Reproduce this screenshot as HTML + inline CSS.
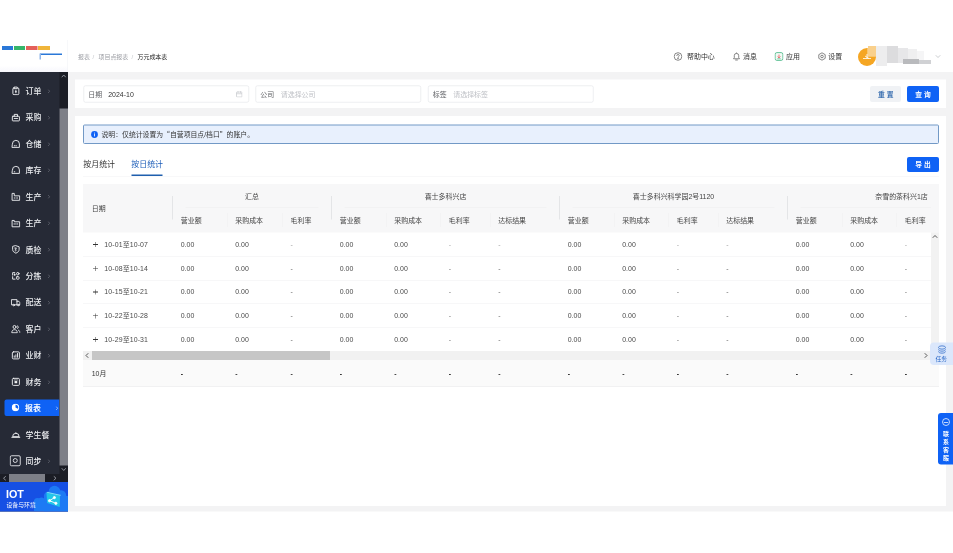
<!DOCTYPE html><html lang="zh-CN"><head><meta charset="utf-8"><title>万元成本表</title><style>
*{box-sizing:border-box;margin:0;padding:0}
html,body{width:953px;height:553px;overflow:hidden;background:#fff}
body{font-family:"Liberation Sans","Noto Sans CJK SC",sans-serif;color:#333}
#root{position:absolute;left:0;top:0;width:1906px;height:1106px;transform:scale(.5);transform-origin:0 0;background:#fff;overflow:hidden;filter:grayscale(0)}
.abs{position:absolute}
.t{position:absolute;white-space:nowrap;line-height:1;transform:translateY(-50%)}
#side{left:0;top:144px;width:136px;height:879px;background:#262a36}
#main{left:136px;top:144px;width:1770px;height:879px;background:#f3f3f4}
.card{position:absolute;background:#fff}
.inp{position:absolute;top:171px;height:34px;width:331px;border:1.5px solid #dcdee2;border-radius:4px;background:#fff}
.mi{position:absolute;left:0;width:119px;height:34px}
.mi .t{font-size:15.9px;color:#eceef1;left:51px;top:18px;font-weight:500}
.mi svg.ic{position:absolute;left:21.5px;top:7.5px;width:19.5px;height:19.5px;fill:none;stroke:#f1f2f4;stroke-width:1.7;stroke-linecap:round;stroke-linejoin:round}
.mi svg.ch{position:absolute;left:95px;top:13.5px;width:6px;height:9px;fill:none;stroke:#6d707b;stroke-width:1.8}
.q{font-family:"Noto Sans CJK SC",sans-serif}
.th{font-size:13.9px;color:#444}
.td{font-size:13.9px;color:#4a4a4a}
</style></head><body><div id="root">
<div class="abs" style="left:0;top:80px;width:1906px;height:64px;background:#fff"></div>
<div class="abs" style="left:0;top:80px;width:136px;height:64px;background:linear-gradient(#fff 0,#fff 80%,#f7f7fc 100%);border-right:1.5px solid #eff0f4"></div>
<div class="abs" style="left:4px;top:91.5px;width:22px;height:8.5px;background:#2a78d8"></div>
<div class="abs" style="left:28px;top:91.5px;width:22px;height:8.5px;background:#35b56a"></div>
<div class="abs" style="left:52px;top:91.5px;width:23px;height:8.5px;background:#e4605a"></div>
<div class="abs" style="left:76px;top:91.5px;width:24px;height:8.5px;background:#f0b53a"></div>
<div class="abs" style="left:80px;top:107px;width:44px;height:3px;background:#2a78d8"></div>
<div class="abs" style="left:79px;top:107px;width:3px;height:12px;background:#8fb6ea"></div>
<div class="t" style="left:156px;top:113.6px;font-size:11.9px;color:#9b9da3">报表</div>
<div class="t" style="left:185px;top:113.6px;font-size:11.9px;color:#c4c6cb">/</div>
<div class="t" style="left:197px;top:113.6px;font-size:11.9px;color:#9b9da3">项目点报表</div>
<div class="t" style="left:263px;top:113.6px;font-size:11.9px;color:#c4c6cb">/</div>
<div class="t" style="left:275px;top:113.6px;font-size:11.9px;color:#222">万元成本表</div>
<svg class="abs" style="left:1347px;top:103.6px" width="18" height="18" viewBox="0 0 18 18" fill="none" stroke="#555" stroke-width="1.4"><circle cx="9" cy="9" r="7.6"/><path d="M6.6 7.2a2.4 2.4 0 1 1 3.4 2.2c-.7.4-1 .8-1 1.6" stroke-linecap="round"/><circle cx="9" cy="13" r=".6" fill="#555"/></svg>
<div class="t" style="left:1374px;top:112.6px;font-size:13.9px;color:#333">帮助中心</div>
<svg class="abs" style="left:1464px;top:102.6px" width="18" height="20" viewBox="0 0 18 20" fill="none" stroke="#555" stroke-width="1.4" stroke-linejoin="round"><path d="M3 14.5h12l-1.6-2.4V8.2a4.4 4.4 0 0 0-8.8 0v3.9z"/><path d="M7.2 17h3.6" stroke-linecap="round"/><path d="M9 2.2v1.6"/></svg>
<div class="t" style="left:1486px;top:112.6px;font-size:13.9px;color:#333">消息</div>
<svg class="abs" style="left:1549px;top:103.6px" width="18" height="18" viewBox="0 0 18 18" fill="none"><rect x="1.2" y="1.2" width="15.6" height="15.6" rx="3.5" stroke="#3fb37f" stroke-width="1.6" fill="#f2fbf6"/><path d="M9 5.2v6.2M6.2 9l2.8 2.8L11.8 9" stroke="#e5484d" stroke-width="1.5"/><path d="M5.5 13.6h7" stroke="#3fb37f" stroke-width="1.3"/></svg>
<div class="t" style="left:1572px;top:112.6px;font-size:13.9px;color:#333">应用</div>
<svg class="abs" style="left:1634.5px;top:103.6px" width="18" height="18" viewBox="0 0 18 18" fill="none" stroke="#555" stroke-width="1.4" stroke-linejoin="round"><path d="M9 1.6l6.4 3.7v7.4L9 16.4l-6.4-3.7V5.3z"/><circle cx="9" cy="9" r="2.6"/></svg>
<div class="t" style="left:1656.5px;top:112.6px;font-size:13.9px;color:#333">设置</div>
<div class="abs" style="left:1716px;top:96px;width:36px;height:36px;border-radius:50%;background:#f5a623;overflow:hidden"><div class="abs" style="left:18px;top:0;width:18px;height:18px;background:#f8c56f"></div></div>
<svg class="abs" style="left:1724px;top:106px" width="20" height="16" viewBox="0 0 20 16" fill="none" stroke="#fff" stroke-width="1.6"><path d="M2 11h16M6 6l8 5M10 2v9"/></svg>
<div class="abs" style="left:1736px;top:92px;width:18px;height:20px;background:#f9d08c"></div>
<div class="abs" style="left:1752px;top:92px;width:22px;height:40px;background:#ededee"></div>
<div class="abs" style="left:1774px;top:92px;width:22px;height:34px;background:#dcdcde"></div>
<div class="abs" style="left:1796px;top:96px;width:20px;height:30px;background:#e7e7e9"></div>
<div class="abs" style="left:1816px;top:98px;width:18px;height:24px;background:#efeff0"></div>
<div class="abs" style="left:1834px;top:102px;width:14px;height:18px;background:#f5f5f6"></div>
<div class="abs" style="left:1806px;top:118px;width:32px;height:10px;background:#b9babd"></div>
<div class="abs" style="left:1838px;top:120px;width:24px;height:8px;background:#d0d1d4"></div>
<svg class="abs" style="left:1870px;top:108.6px" width="12" height="8" viewBox="0 0 12 8" fill="none" stroke="#b5b7bc" stroke-width="1.4"><path d="M1.5 1.5L6 6l4.5-4.5"/></svg>
<div id="side" class="abs">
<div class="mi" style="top:20.2px">
<svg class="ic" viewBox="0 0 18 18"><rect x="3.5" y="3.5" width="11" height="12.5" rx="2"/><path d="M6.5 2h5v3h-5z" fill="#262a36"/><path d="M9 8v4.5M8 10.5h2"/></svg>
<div class="t">订单</div>
<svg class="ch" viewBox="0 0 8 12"><path d="M1.5 1.5L6 6l-4.5 4.5"/></svg>
</div>
<div class="mi" style="top:73.1px">
<svg class="ic" viewBox="0 0 18 18"><rect x="2.5" y="7" width="13" height="8.5" rx="1"/><path d="M6 7V3.5h6V7M6 11h6"/></svg>
<div class="t">采购</div>
<svg class="ch" viewBox="0 0 8 12"><path d="M1.5 1.5L6 6l-4.5 4.5"/></svg>
</div>
<div class="mi" style="top:126px">
<svg class="ic" viewBox="0 0 18 18"><path d="M2.5 9a6.5 6.5 0 0 1 13 0v6.5h-13z"/><path d="M6 12.5h1M9 12.5h1"/></svg>
<div class="t">仓储</div>
<svg class="ch" viewBox="0 0 8 12"><path d="M1.5 1.5L6 6l-4.5 4.5"/></svg>
</div>
<div class="mi" style="top:178.9px">
<svg class="ic" viewBox="0 0 18 18"><path d="M2.5 9a6.5 6.5 0 0 1 13 0v6.5h-13z"/><path d="M6 12.5h1"/></svg>
<div class="t">库存</div>
<svg class="ch" viewBox="0 0 8 12"><path d="M1.5 1.5L6 6l-4.5 4.5"/></svg>
</div>
<div class="mi" style="top:231.8px">
<svg class="ic" viewBox="0 0 18 18"><path d="M2 15.5V3.5h4V8h10v7.5z"/><path d="M6 12h1.5M10.5 12h1.5"/></svg>
<div class="t">生产</div>
<svg class="ch" viewBox="0 0 8 12"><path d="M1.5 1.5L6 6l-4.5 4.5"/></svg>
</div>
<div class="mi" style="top:284.7px">
<svg class="ic" viewBox="0 0 18 18"><path d="M2 15.5V4.5h4v2.5h10v8.5z"/><path d="M5.5 11h1M8.5 11h1M11.5 11h1"/></svg>
<div class="t">生产</div>
<svg class="ch" viewBox="0 0 8 12"><path d="M1.5 1.5L6 6l-4.5 4.5"/></svg>
</div>
<div class="mi" style="top:337.6px">
<svg class="ic" viewBox="0 0 18 18"><path d="M9 2.2l6 2v5c0 3.4-2.6 5.6-6 6.8-3.4-1.2-6-3.4-6-6.8v-5z"/><path d="M7 6.5h3l-2 2.5c2.5 0 2.5 3-.5 3"/></svg>
<div class="t">质检</div>
<svg class="ch" viewBox="0 0 8 12"><path d="M1.5 1.5L6 6l-4.5 4.5"/></svg>
</div>
<div class="mi" style="top:390.5px">
<svg class="ic" viewBox="0 0 18 18"><path d="M7 3H3v4.5M3 10.5V15h4.5"/><circle cx="12.5" cy="5" r="2.3"/><rect x="10.2" y="10.5" width="4.6" height="4.6" rx="1"/><rect x="5.8" y="6" width="2" height="2" rx=".5"/></svg>
<div class="t">分拣</div>
<svg class="ch" viewBox="0 0 8 12"><path d="M1.5 1.5L6 6l-4.5 4.5"/></svg>
</div>
<div class="mi" style="top:443.4px">
<svg class="ic" viewBox="0 0 18 18"><path d="M1.5 4h9.5v9.5h-9.5zM11 7h3.5l2 2.5v4h-5.5"/><circle cx="5" cy="14" r="1.4" fill="#262a36"/><circle cx="13.5" cy="14" r="1.4" fill="#262a36"/></svg>
<div class="t">配送</div>
<svg class="ch" viewBox="0 0 8 12"><path d="M1.5 1.5L6 6l-4.5 4.5"/></svg>
</div>
<div class="mi" style="top:496.3px">
<svg class="ic" viewBox="0 0 18 18"><circle cx="6.5" cy="5.5" r="2.8"/><path d="M1.5 15.5c0-3.5 2-5 5-5s5 1.5 5 5z"/><path d="M12 3.5a2.5 2.5 0 0 1 0 4.6M14 11.5c1.8.5 2.5 2 2.5 4"/></svg>
<div class="t">客户</div>
<svg class="ch" viewBox="0 0 8 12"><path d="M1.5 1.5L6 6l-4.5 4.5"/></svg>
</div>
<div class="mi" style="top:549.2px">
<svg class="ic" viewBox="0 0 18 18"><rect x="2.5" y="2.5" width="13" height="13" rx="2"/><path d="M6 12.5v-2.5M9 12.5v-4.5M12 12.5v-7"/></svg>
<div class="t">业财</div>
<svg class="ch" viewBox="0 0 8 12"><path d="M1.5 1.5L6 6l-4.5 4.5"/></svg>
</div>
<div class="mi" style="top:602.1px">
<svg class="ic" viewBox="0 0 18 18"><rect x="2.5" y="2.5" width="13" height="13" rx="2"/><rect x="6.5" y="7.5" width="5" height="4" fill="#f1f2f4" stroke="none"/><path d="M6 5.5h6" stroke-width="1.2"/></svg>
<div class="t">财务</div>
<svg class="ch" viewBox="0 0 8 12"><path d="M1.5 1.5L6 6l-4.5 4.5"/></svg>
</div>
<div class="mi" style="top:654.7px;left:8.5px;width:110.5px;height:33px;background:#0f62f5;border-radius:4px 0 0 4px">
<svg class="abs" style="left:14px;top:8.5px" width="16" height="16" viewBox="0 0 16 16"><circle cx="8" cy="8" r="7.4" fill="#fff"/><path d="M8 8V2.5A5.5 5.5 0 0 1 12.8 10.7z" fill="#0f62f5"/></svg>
<div class="t" style="left:41.5px;font-weight:bold;color:#fff">报表</div>
<svg class="ch" style="left:102.5px;stroke:#cfe0ff" viewBox="0 0 8 12"><path d="M1.5 1.5L6 6l-4.5 4.5"/></svg></div>
<div class="mi" style="top:707.9px">
<svg class="ic" viewBox="0 0 18 18"><path d="M1.5 14.5h15M3 12.5a6 5.5 0 0 1 12 0zM9 6v1"/></svg>
<div class="t">学生餐</div>
</div>
<div class="mi" style="top:760.8px">
<svg class="abs" style="left:19px;top:5px;fill:none;stroke:#e8e9ec;stroke-width:1.8" width="24" height="24" viewBox="0 0 24 24"><rect x="1.5" y="1.5" width="20" height="20" rx="2.5"/><circle cx="11.5" cy="11" r="4"/></svg>
<div class="t">同步</div>
<svg class="ch" viewBox="0 0 8 12"><path d="M1.5 1.5L6 6l-4.5 4.5"/></svg>
</div>
<div class="abs" style="left:119px;top:0;width:17px;height:804px;background:#1b1d25"></div>
<div class="abs" style="left:119px;top:73px;width:17px;height:714px;background:#7d7f87"></div>
<svg class="abs" style="left:122px;top:4px" width="11" height="8" viewBox="0 0 11 8" fill="none" stroke="#8d9099" stroke-width="2"><path d="M1.5 6.5l4-4.5 4 4.5"/></svg>
<svg class="abs" style="left:122px;top:791px" width="11" height="8" viewBox="0 0 11 8" fill="none" stroke="#8d9099" stroke-width="2"><path d="M1.5 1.5l4 4.5 4-4.5"/></svg>
<div class="abs" style="left:0;top:804px;width:136px;height:16px;background:#1b1d25"></div>
<div class="abs" style="left:18px;top:804px;width:72px;height:16px;background:#7d7f87"></div>
<svg class="abs" style="left:5px;top:807px" width="8" height="11" viewBox="0 0 8 11" fill="none" stroke="#8d9099" stroke-width="2"><path d="M6.5 1.5l-4.5 4 4.5 4"/></svg>
<svg class="abs" style="left:106px;top:807px" width="8" height="11" viewBox="0 0 8 11" fill="none" stroke="#8d9099" stroke-width="2"><path d="M1.5 1.5l4.5 4-4.5 4"/></svg>
<div class="abs" style="left:0;top:820px;width:136px;height:59px;background:#1650e4;overflow:hidden">
<svg class="abs" style="left:0;top:0" width="136" height="59" viewBox="0 0 68 29.5"><g fill="#1d7af4"><circle cx="54.5" cy="9.5" r="5.8"/><circle cx="61" cy="13.5" r="5.2"/><circle cx="48.5" cy="14" r="4.6"/><rect x="44" y="14" width="24" height="16"/><circle cx="37.5" cy="19.5" r="3.6"/><circle cx="41.5" cy="18.5" r="3"/><rect x="34" y="19.5" width="14" height="10"/></g><path d="M46.4 10.7L60 13.7l-.3 11.3-12.5-4z" fill="#21c6e8"/><path d="M46.4 10.7L60 13.7l1.2-.8-13.4-3z" fill="#7fe3f5"/><g stroke="#fff" stroke-width=".9" fill="#fff"><path d="M54.4 15.6l-4.9 3.1 6.4 2.6" fill="none"/><circle cx="49.5" cy="18.7" r="1.1"/><circle cx="54.4" cy="15.6" r="1.1"/><circle cx="55.9" cy="21.3" r="1.1"/></g></svg>
<div class="t" style="left:12px;top:24.5px;font-size:21.5px;font-weight:bold;color:#fff;letter-spacing:0">IOT</div>
<div class="t" style="left:13px;top:45.8px;font-size:11.7px;color:#fff">设备与环境</div>
</div>
</div>
<div id="main" class="abs"></div>
<div class="card" style="left:150px;top:159px;width:1742px;height:57px"></div>
<div class="inp" style="left:166.5px"></div>
<div class="t" style="left:176.5px;top:188.8px;font-size:13.9px;color:#606266">日期</div>
<div class="t" style="left:216.5px;top:188.8px;font-size:13.9px;color:#333">2024-10</div>
<svg class="abs" style="left:472px;top:182px" width="13" height="13" viewBox="0 0 13 13" fill="none" stroke="#c0c2c7" stroke-width="1.3"><rect x="1" y="2" width="11" height="10" rx="1"/><path d="M1 5.5h11M4 .500v3M9 .500v3"/></svg>
<div class="inp" style="left:510.5px"></div>
<div class="t" style="left:520.5px;top:188.8px;font-size:13.9px;color:#606266">公司</div>
<div class="t" style="left:561.5px;top:188.8px;font-size:13.9px;color:#bfc1c6">请选择公司</div>
<div class="inp" style="left:855.5px"></div>
<div class="t" style="left:865.5px;top:188.8px;font-size:13.9px;color:#606266">标签</div>
<div class="t" style="left:906.5px;top:188.8px;font-size:13.9px;color:#bfc1c6">请选择标签</div>
<div class="abs" style="left:1740px;top:172px;width:62px;height:32px;background:#f0f2f5;border-radius:4px"></div>
<div class="t" style="left:1756px;top:188.5px;font-size:13.5px;color:#3a6fb0;font-weight:bold">重 置</div>
<div class="abs" style="left:1814px;top:172px;width:64px;height:32px;background:#0f62f5;border-radius:4px"></div>
<div class="t" style="left:1830.5px;top:188.5px;font-size:13.5px;color:#fff;font-weight:bold">查 询</div>
<div class="card" style="left:150px;top:232px;width:1742px;height:780px"></div>
<div class="abs" style="left:166px;top:248.5px;width:1712px;height:39px;background:#e8f0fd;border:2px solid #7299c6;border-radius:3px"></div>
<svg class="abs" style="left:181.5px;top:261.5px" width="14" height="14" viewBox="0 0 14 14"><circle cx="7" cy="7" r="6.8" fill="#0f62f5"/><rect x="6.2" y="5.8" width="1.6" height="5" fill="#fff"/><circle cx="7" cy="3.9" r="1" fill="#fff"/></svg>
<div class="t" style="left:203px;top:268.6px;font-size:13.7px;color:#333">说明：仅统计设置为<span class="q">“</span>自营项目点/档口<span class="q">”</span>的账户。</div>
<div class="t" style="left:166.5px;top:329px;font-size:15.9px;color:#333">按月统计</div>
<div class="t" style="left:262.5px;top:329px;font-size:15.9px;color:#1c5db8">按日统计</div>
<div class="abs" style="left:166px;top:352px;width:1712px;height:1px;background:#f1f1f2"></div>
<div class="abs" style="left:262.5px;top:349px;width:62px;height:3px;background:#1f5fae"></div>
<div class="abs" style="left:1814px;top:313.5px;width:64px;height:30.5px;background:#0f62f5;border-radius:4px"></div>
<div class="t" style="left:1830.5px;top:329px;font-size:13.5px;color:#fff;font-weight:bold">导 出</div>
<div class="abs" style="left:166px;top:368px;width:1711.5px;height:97px;background:#f7f7f8"></div>
<div class="abs" id="tbl" style="left:166px;top:368px;width:1696px;height:406px;overflow:hidden">
<div class="t th" style="left:17.5px;top:49.19999999999999px">日期</div>
<div class="t th" style="left:338px;top:26.19999999999999px;transform:translate(-50%,-50%)">汇总</div>
<div class="abs" style="left:178.2px;top:24px;width:1.5px;height:47px;background:#e4e5e7"></div>
<div class="abs" style="left:205px;top:45.5px;width:266px;height:1px;background:#ececee"></div>
<div class="t th" style="left:725px;top:26.19999999999999px;transform:translate(-50%,-50%)">喜士多科兴店</div>
<div class="abs" style="left:496.2px;top:24px;width:1.5px;height:47px;background:#e4e5e7"></div>
<div class="abs" style="left:523px;top:45.5px;width:404px;height:1px;background:#ececee"></div>
<div class="t th" style="left:1181px;top:26.19999999999999px;transform:translate(-50%,-50%)">喜士多科兴科学园2号1120</div>
<div class="abs" style="left:952.2px;top:24px;width:1.5px;height:47px;background:#e4e5e7"></div>
<div class="abs" style="left:979px;top:45.5px;width:404px;height:1px;background:#ececee"></div>
<div class="t th" style="left:1637px;top:26.19999999999999px;transform:translate(-50%,-50%)">奈雪的茶科兴1店</div>
<div class="abs" style="left:1408.2px;top:24px;width:1.5px;height:47px;background:#e4e5e7"></div>
<div class="abs" style="left:1435px;top:45.5px;width:404px;height:1px;background:#ececee"></div>
<div class="t th" style="left:195.5px;top:72.60000000000002px">营业额</div>
<div class="t th" style="left:304.5px;top:72.60000000000002px">采购成本</div>
<div class="abs" style="left:287.5px;top:58px;width:1px;height:28px;background:#efeff1"></div>
<div class="t th" style="left:415px;top:72.60000000000002px">毛利率</div>
<div class="abs" style="left:398px;top:58px;width:1px;height:28px;background:#efeff1"></div>
<div class="t th" style="left:513.5px;top:72.60000000000002px">营业额</div>
<div class="t th" style="left:622.5px;top:72.60000000000002px">采购成本</div>
<div class="abs" style="left:605.5px;top:58px;width:1px;height:28px;background:#efeff1"></div>
<div class="t th" style="left:731.5px;top:72.60000000000002px">毛利率</div>
<div class="abs" style="left:714.5px;top:58px;width:1px;height:28px;background:#efeff1"></div>
<div class="t th" style="left:830.5px;top:72.60000000000002px">达标结果</div>
<div class="abs" style="left:813.5px;top:58px;width:1px;height:28px;background:#efeff1"></div>
<div class="t th" style="left:969.5px;top:72.60000000000002px">营业额</div>
<div class="t th" style="left:1078.5px;top:72.60000000000002px">采购成本</div>
<div class="abs" style="left:1061.5px;top:58px;width:1px;height:28px;background:#efeff1"></div>
<div class="t th" style="left:1187.5px;top:72.60000000000002px">毛利率</div>
<div class="abs" style="left:1170.5px;top:58px;width:1px;height:28px;background:#efeff1"></div>
<div class="t th" style="left:1286.5px;top:72.60000000000002px">达标结果</div>
<div class="abs" style="left:1269.5px;top:58px;width:1px;height:28px;background:#efeff1"></div>
<div class="t th" style="left:1425.5px;top:72.60000000000002px">营业额</div>
<div class="t th" style="left:1534.5px;top:72.60000000000002px">采购成本</div>
<div class="abs" style="left:1517.5px;top:58px;width:1px;height:28px;background:#efeff1"></div>
<div class="t th" style="left:1643.5px;top:72.60000000000002px">毛利率</div>
<div class="abs" style="left:1626.5px;top:58px;width:1px;height:28px;background:#efeff1"></div>
<div class="t th" style="left:1742.5px;top:72.60000000000002px">达标结果</div>
<div class="abs" style="left:1725.5px;top:58px;width:1px;height:28px;background:#efeff1"></div>
<div class="abs" style="left:19.5px;top:120.3px;width:10px;height:1.4px;background:#333"></div><div class="abs" style="left:23.8px;top:116px;width:1.4px;height:10px;background:#333"></div>
<div class="t td" style="left:42.5px;top:121px;letter-spacing:.25px">10-01至10-07</div>
<div class="t td" style="left:195.5px;top:121px;color:#4a4a4a">0.00</div>
<div class="t td" style="left:304.5px;top:121px;color:#4a4a4a">0.00</div>
<div class="t td" style="left:415px;top:121px;color:#a0a0a0">-</div>
<div class="t td" style="left:513.5px;top:121px;color:#4a4a4a">0.00</div>
<div class="t td" style="left:622.5px;top:121px;color:#4a4a4a">0.00</div>
<div class="t td" style="left:731.5px;top:121px;color:#a0a0a0">-</div>
<div class="t td" style="left:830.5px;top:121px;color:#a0a0a0">-</div>
<div class="t td" style="left:969.5px;top:121px;color:#4a4a4a">0.00</div>
<div class="t td" style="left:1078.5px;top:121px;color:#4a4a4a">0.00</div>
<div class="t td" style="left:1187.5px;top:121px;color:#a0a0a0">-</div>
<div class="t td" style="left:1286.5px;top:121px;color:#a0a0a0">-</div>
<div class="t td" style="left:1425.5px;top:121px;color:#4a4a4a">0.00</div>
<div class="t td" style="left:1534.5px;top:121px;color:#4a4a4a">0.00</div>
<div class="t td" style="left:1643.5px;top:121px;color:#a0a0a0">-</div>
<div class="t td" style="left:1742.5px;top:121px;color:#a0a0a0">-</div>
<div class="abs" style="left:0;top:144px;width:1700px;height:1px;background:#efeff0"></div>
<div class="abs" style="left:19.5px;top:167.9px;width:10px;height:1.4px;background:#333"></div><div class="abs" style="left:23.8px;top:163.6px;width:1.4px;height:10px;background:#333"></div>
<div class="t td" style="left:42.5px;top:168.6px;letter-spacing:.25px">10-08至10-14</div>
<div class="t td" style="left:195.5px;top:168.6px;color:#4a4a4a">0.00</div>
<div class="t td" style="left:304.5px;top:168.6px;color:#4a4a4a">0.00</div>
<div class="t td" style="left:415px;top:168.6px;color:#666">-</div>
<div class="t td" style="left:513.5px;top:168.6px;color:#4a4a4a">0.00</div>
<div class="t td" style="left:622.5px;top:168.6px;color:#4a4a4a">0.00</div>
<div class="t td" style="left:731.5px;top:168.6px;color:#666">-</div>
<div class="t td" style="left:830.5px;top:168.6px;color:#666">-</div>
<div class="t td" style="left:969.5px;top:168.6px;color:#4a4a4a">0.00</div>
<div class="t td" style="left:1078.5px;top:168.6px;color:#4a4a4a">0.00</div>
<div class="t td" style="left:1187.5px;top:168.6px;color:#666">-</div>
<div class="t td" style="left:1286.5px;top:168.6px;color:#666">-</div>
<div class="t td" style="left:1425.5px;top:168.6px;color:#4a4a4a">0.00</div>
<div class="t td" style="left:1534.5px;top:168.6px;color:#4a4a4a">0.00</div>
<div class="t td" style="left:1643.5px;top:168.6px;color:#666">-</div>
<div class="t td" style="left:1742.5px;top:168.6px;color:#666">-</div>
<div class="abs" style="left:0;top:191.5px;width:1700px;height:1px;background:#efeff0"></div>
<div class="abs" style="left:19.5px;top:215.4px;width:10px;height:1.4px;background:#333"></div><div class="abs" style="left:23.8px;top:211.1px;width:1.4px;height:10px;background:#333"></div>
<div class="t td" style="left:42.5px;top:216.1px;letter-spacing:.25px">10-15至10-21</div>
<div class="t td" style="left:195.5px;top:216.1px;color:#4a4a4a">0.00</div>
<div class="t td" style="left:304.5px;top:216.1px;color:#4a4a4a">0.00</div>
<div class="t td" style="left:415px;top:216.1px;color:#666">-</div>
<div class="t td" style="left:513.5px;top:216.1px;color:#4a4a4a">0.00</div>
<div class="t td" style="left:622.5px;top:216.1px;color:#4a4a4a">0.00</div>
<div class="t td" style="left:731.5px;top:216.1px;color:#666">-</div>
<div class="t td" style="left:830.5px;top:216.1px;color:#666">-</div>
<div class="t td" style="left:969.5px;top:216.1px;color:#4a4a4a">0.00</div>
<div class="t td" style="left:1078.5px;top:216.1px;color:#4a4a4a">0.00</div>
<div class="t td" style="left:1187.5px;top:216.1px;color:#666">-</div>
<div class="t td" style="left:1286.5px;top:216.1px;color:#666">-</div>
<div class="t td" style="left:1425.5px;top:216.1px;color:#4a4a4a">0.00</div>
<div class="t td" style="left:1534.5px;top:216.1px;color:#4a4a4a">0.00</div>
<div class="t td" style="left:1643.5px;top:216.1px;color:#666">-</div>
<div class="t td" style="left:1742.5px;top:216.1px;color:#666">-</div>
<div class="abs" style="left:0;top:239px;width:1700px;height:1px;background:#efeff0"></div>
<div class="abs" style="left:19.5px;top:262.9px;width:10px;height:1.4px;background:#333"></div><div class="abs" style="left:23.8px;top:258.6px;width:1.4px;height:10px;background:#333"></div>
<div class="t td" style="left:42.5px;top:263.6px;letter-spacing:.25px">10-22至10-28</div>
<div class="t td" style="left:195.5px;top:263.6px;color:#4a4a4a">0.00</div>
<div class="t td" style="left:304.5px;top:263.6px;color:#4a4a4a">0.00</div>
<div class="t td" style="left:415px;top:263.6px;color:#666">-</div>
<div class="t td" style="left:513.5px;top:263.6px;color:#4a4a4a">0.00</div>
<div class="t td" style="left:622.5px;top:263.6px;color:#4a4a4a">0.00</div>
<div class="t td" style="left:731.5px;top:263.6px;color:#666">-</div>
<div class="t td" style="left:830.5px;top:263.6px;color:#666">-</div>
<div class="t td" style="left:969.5px;top:263.6px;color:#4a4a4a">0.00</div>
<div class="t td" style="left:1078.5px;top:263.6px;color:#4a4a4a">0.00</div>
<div class="t td" style="left:1187.5px;top:263.6px;color:#666">-</div>
<div class="t td" style="left:1286.5px;top:263.6px;color:#666">-</div>
<div class="t td" style="left:1425.5px;top:263.6px;color:#4a4a4a">0.00</div>
<div class="t td" style="left:1534.5px;top:263.6px;color:#4a4a4a">0.00</div>
<div class="t td" style="left:1643.5px;top:263.6px;color:#666">-</div>
<div class="t td" style="left:1742.5px;top:263.6px;color:#666">-</div>
<div class="abs" style="left:0;top:286.5px;width:1700px;height:1px;background:#efeff0"></div>
<div class="abs" style="left:19.5px;top:310.4px;width:10px;height:1.4px;background:#333"></div><div class="abs" style="left:23.8px;top:306.1px;width:1.4px;height:10px;background:#333"></div>
<div class="t td" style="left:42.5px;top:311.1px;letter-spacing:.25px">10-29至10-31</div>
<div class="t td" style="left:195.5px;top:311.1px;color:#4a4a4a">0.00</div>
<div class="t td" style="left:304.5px;top:311.1px;color:#4a4a4a">0.00</div>
<div class="t td" style="left:415px;top:311.1px;color:#666">-</div>
<div class="t td" style="left:513.5px;top:311.1px;color:#4a4a4a">0.00</div>
<div class="t td" style="left:622.5px;top:311.1px;color:#4a4a4a">0.00</div>
<div class="t td" style="left:731.5px;top:311.1px;color:#666">-</div>
<div class="t td" style="left:830.5px;top:311.1px;color:#666">-</div>
<div class="t td" style="left:969.5px;top:311.1px;color:#4a4a4a">0.00</div>
<div class="t td" style="left:1078.5px;top:311.1px;color:#4a4a4a">0.00</div>
<div class="t td" style="left:1187.5px;top:311.1px;color:#666">-</div>
<div class="t td" style="left:1286.5px;top:311.1px;color:#666">-</div>
<div class="t td" style="left:1425.5px;top:311.1px;color:#4a4a4a">0.00</div>
<div class="t td" style="left:1534.5px;top:311.1px;color:#4a4a4a">0.00</div>
<div class="t td" style="left:1643.5px;top:311.1px;color:#666">-</div>
<div class="t td" style="left:1742.5px;top:311.1px;color:#666">-</div>
</div>
<div class="abs" style="left:166px;top:702px;width:1696px;height:18px;background:#f1f1f1"></div>
<div class="abs" style="left:183.5px;top:702px;width:476px;height:18px;background:#c6c6c6"></div>
<svg class="abs" style="left:170px;top:705px" width="8" height="12" viewBox="0 0 8 12" fill="none" stroke="#444" stroke-width="1.8"><path d="M6.5 1.5L2 6l4.5 4.5"/></svg>
<svg class="abs" style="left:1848px;top:705px" width="8" height="12" viewBox="0 0 8 12" fill="none" stroke="#444" stroke-width="1.8"><path d="M1.5 1.5L6 6l-4.5 4.5"/></svg>
<div class="abs" style="left:1862px;top:465px;width:15.5px;height:255px;background:#f2f2f2"></div>
<svg class="abs" style="left:1864px;top:469px" width="12" height="8" viewBox="0 0 12 8" fill="none" stroke="#444" stroke-width="1.8"><path d="M1.5 6.5L6 2l4.5 4.5"/></svg>
<div class="abs" style="left:166px;top:720px;width:1711.5px;height:53.5px;background:#fafafa;border-bottom:1px solid #e9e9ea"></div>
<div class="abs" style="left:166px;top:720px;width:1696px;height:53px;overflow:hidden">
<div class="t td" style="left:17.5px;top:27.5px;color:#333">10月</div>
<div class="t td" style="left:195.5px;top:27.5px;color:#333;font-weight:bold">-</div>
<div class="t td" style="left:304.5px;top:27.5px;color:#333;font-weight:bold">-</div>
<div class="t td" style="left:415px;top:27.5px;color:#333;font-weight:bold">-</div>
<div class="t td" style="left:513.5px;top:27.5px;color:#333;font-weight:bold">-</div>
<div class="t td" style="left:622.5px;top:27.5px;color:#333;font-weight:bold">-</div>
<div class="t td" style="left:731.5px;top:27.5px;color:#333;font-weight:bold">-</div>
<div class="t td" style="left:830.5px;top:27.5px;color:#333;font-weight:bold">-</div>
<div class="t td" style="left:969.5px;top:27.5px;color:#333;font-weight:bold">-</div>
<div class="t td" style="left:1078.5px;top:27.5px;color:#333;font-weight:bold">-</div>
<div class="t td" style="left:1187.5px;top:27.5px;color:#333;font-weight:bold">-</div>
<div class="t td" style="left:1286.5px;top:27.5px;color:#333;font-weight:bold">-</div>
<div class="t td" style="left:1425.5px;top:27.5px;color:#333;font-weight:bold">-</div>
<div class="t td" style="left:1534.5px;top:27.5px;color:#333;font-weight:bold">-</div>
<div class="t td" style="left:1643.5px;top:27.5px;color:#333;font-weight:bold">-</div>
<div class="t td" style="left:1742.5px;top:27.5px;color:#333;font-weight:bold">-</div>
</div>
<div class="abs" style="left:1859.5px;top:684.5px;width:50px;height:45px;background:#dbe7fb;border-radius:8px 0 0 8px"></div>
<svg class="abs" style="left:1874px;top:689px" width="20" height="20" viewBox="0 0 20 20" fill="none" stroke="#2a68c8" stroke-width="1.5"><ellipse cx="10" cy="6" rx="7" ry="3.3"/><path d="M3 10c0 1.8 3.1 3.3 7 3.3s7-1.5 7-3.3M3 14c0 1.8 3.1 3.3 7 3.3s7-1.5 7-3.3"/></svg>
<div class="t" style="left:1871px;top:718.6px;font-size:11.5px;color:#2a68c8">任务</div>
<div class="abs" style="left:1875.5px;top:825.5px;width:34px;height:103px;background:#0f62f5;border-radius:6px 0 0 6px"></div>
<svg class="abs" style="left:1883px;top:835px" width="18" height="18" viewBox="0 0 18 18" fill="none" stroke="#fff" stroke-width="1.5"><circle cx="9" cy="9" r="7"/><path d="M5.5 10h7" stroke-linecap="round"/></svg>
<div class="t" style="left:1886px;top:867.2px;font-size:12px;font-weight:bold;color:#fff">联</div>
<div class="t" style="left:1886px;top:883.1px;font-size:12px;font-weight:bold;color:#fff">系</div>
<div class="t" style="left:1886px;top:899px;font-size:12px;font-weight:bold;color:#fff">客</div>
<div class="t" style="left:1886px;top:914.9px;font-size:12px;font-weight:bold;color:#fff">服</div>
</div></body></html>
